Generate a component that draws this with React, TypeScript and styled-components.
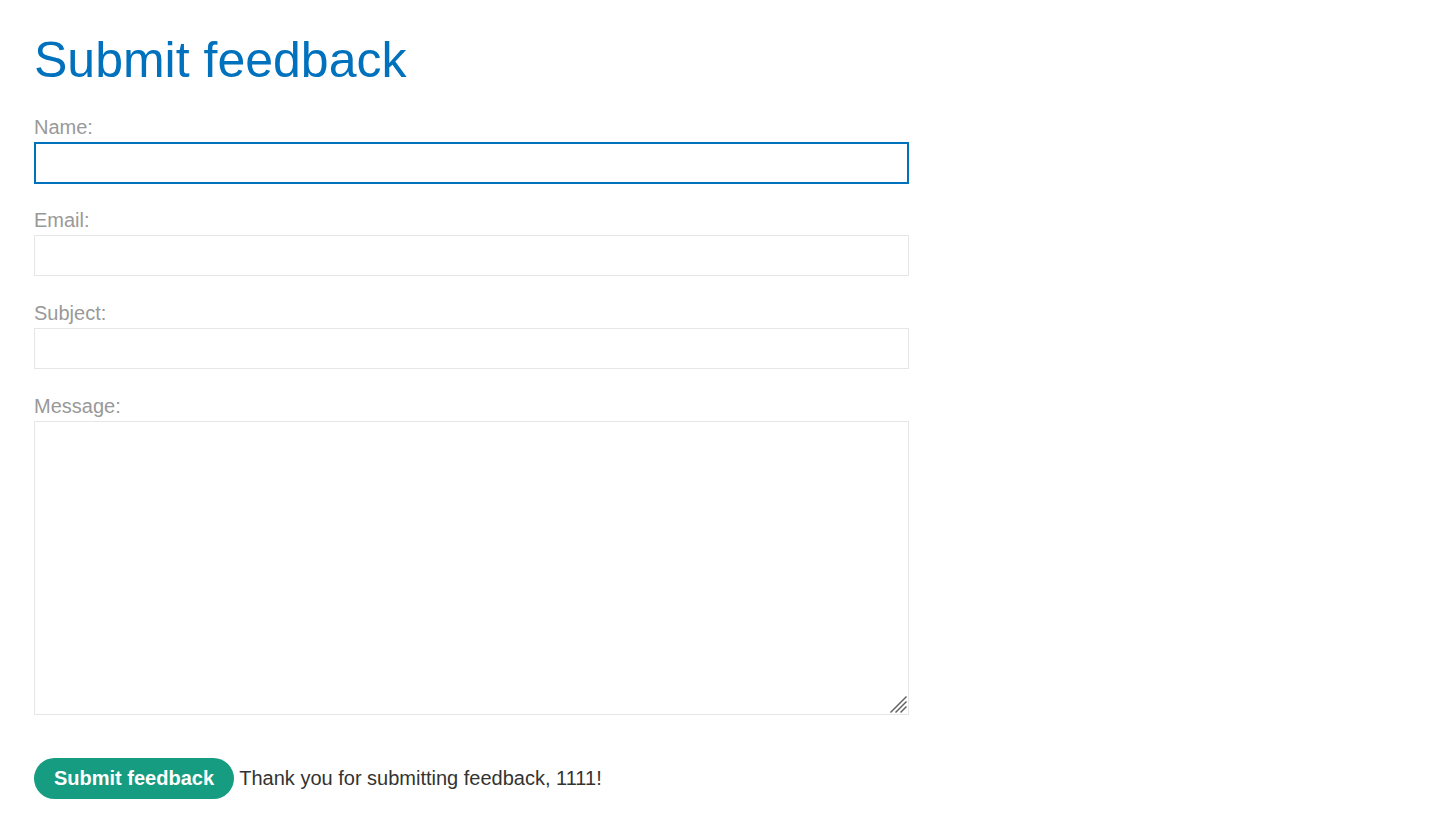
import React, { FC, useState } from "react";
import styled, { createGlobalStyle } from "styled-components";

const GlobalStyle = createGlobalStyle`
  html, body {
    margin: 0;
    padding: 0;
    background: #ffffff;
  }
  body {
    font-family: "Liberation Sans", Arial, sans-serif;
    color: #333332;
  }
`;

const Page = styled.main`
  padding: 0 34px;
`;

const Title = styled.h1`
  margin: 31px 0 26px;
  font-size: 50px;
  line-height: 58px;
  font-weight: 400;
  color: #0071bc;
`;

const Form = styled.form`
  display: flex;
  flex-direction: column;
  width: 875px;
`;

const Field = styled.div`
  display: flex;
  flex-direction: column;
  margin-bottom: 25px;
`;

const Label = styled.label`
  font-size: 20px;
  line-height: 24px;
  color: #999999;
  margin-bottom: 3px;
`;

const Input = styled.input<{ $focused?: boolean }>`
  box-sizing: border-box;
  width: 100%;
  height: ${(p) => (p.$focused ? "42px" : "41px")};
  margin: 0 0 ${(p) => (p.$focused ? "-1px" : "0")};
  padding: 0 10px;
  font-family: inherit;
  font-size: 20px;
  color: #333332;
  background: #ffffff;
  border: ${(p) => (p.$focused ? "2px solid #0071bc" : "1px solid #e6e6e6")};
  border-radius: 0;
  outline: none;
`;

const AreaWrap = styled.div`
  position: relative;
  display: flex;
`;

const TextArea = styled.textarea`
  box-sizing: border-box;
  width: 100%;
  height: 294px;
  margin: 0;
  padding: 8px 10px;
  font-family: inherit;
  font-size: 20px;
  color: #333332;
  border: 1px solid #e6e6e6;
  border-radius: 0;
  outline: none;
  resize: none;
`;

const Grip = styled.svg`
  position: absolute;
  right: 2px;
  bottom: 2px;
  width: 18px;
  height: 18px;
  pointer-events: none;
`;

const Actions = styled.div`
  margin-top: 18px;
  font-size: 20px;
  line-height: 41px;
  white-space: nowrap;
`;

const SubmitButton = styled.button`
  height: 41px;
  padding: 0 20px;
  margin: 0;
  border: none;
  border-radius: 21px;
  background: #169c80;
  color: #ffffff;
  font-family: inherit;
  font-size: 20px;
  font-weight: 700;
  vertical-align: top;
  cursor: pointer;
`;

const Notice = styled.span`
  color: #333332;
`;

const ResizeGrip: FC = () => (
  <Grip viewBox="0 0 18 18" aria-hidden="true">
    <g stroke="#5f5f5f" strokeWidth="1.4" strokeLinecap="square">
      <line x1="17" y1="2" x2="2" y2="17" />
      <line x1="17" y1="7" x2="7" y2="17" />
      <line x1="17" y1="12" x2="12" y2="17" />
    </g>
  </Grip>
);

const App: FC = () => {
  const [values, setValues] = useState({ name: "", email: "", subject: "", message: "" });

  const handleChange = (name: string) => (e: React.ChangeEvent<HTMLInputElement | HTMLTextAreaElement>) => {
    setValues({ ...values, [name]: e.target.value });
  };

  return (
    <>
      <GlobalStyle />
      <Page>
        <Title>Submit feedback</Title>
        <Form onSubmit={(e) => e.preventDefault()}>
          <Field>
            <Label htmlFor="name">Name:</Label>
            <Input id="name" $focused value={values.name} onChange={handleChange("name")} />
          </Field>
          <Field>
            <Label htmlFor="email">Email:</Label>
            <Input id="email" value={values.email} onChange={handleChange("email")} />
          </Field>
          <Field>
            <Label htmlFor="subject">Subject:</Label>
            <Input id="subject" value={values.subject} onChange={handleChange("subject")} />
          </Field>
          <Field>
            <Label htmlFor="message">Message:</Label>
            <AreaWrap>
              <TextArea id="message" value={values.message} onChange={handleChange("message")} />
              <ResizeGrip />
            </AreaWrap>
          </Field>
          <Actions>
            <SubmitButton type="submit">Submit feedback</SubmitButton> <Notice>Thank you for submitting feedback, 1111!</Notice>
          </Actions>
        </Form>
      </Page>
    </>
  );
};

export default App;
